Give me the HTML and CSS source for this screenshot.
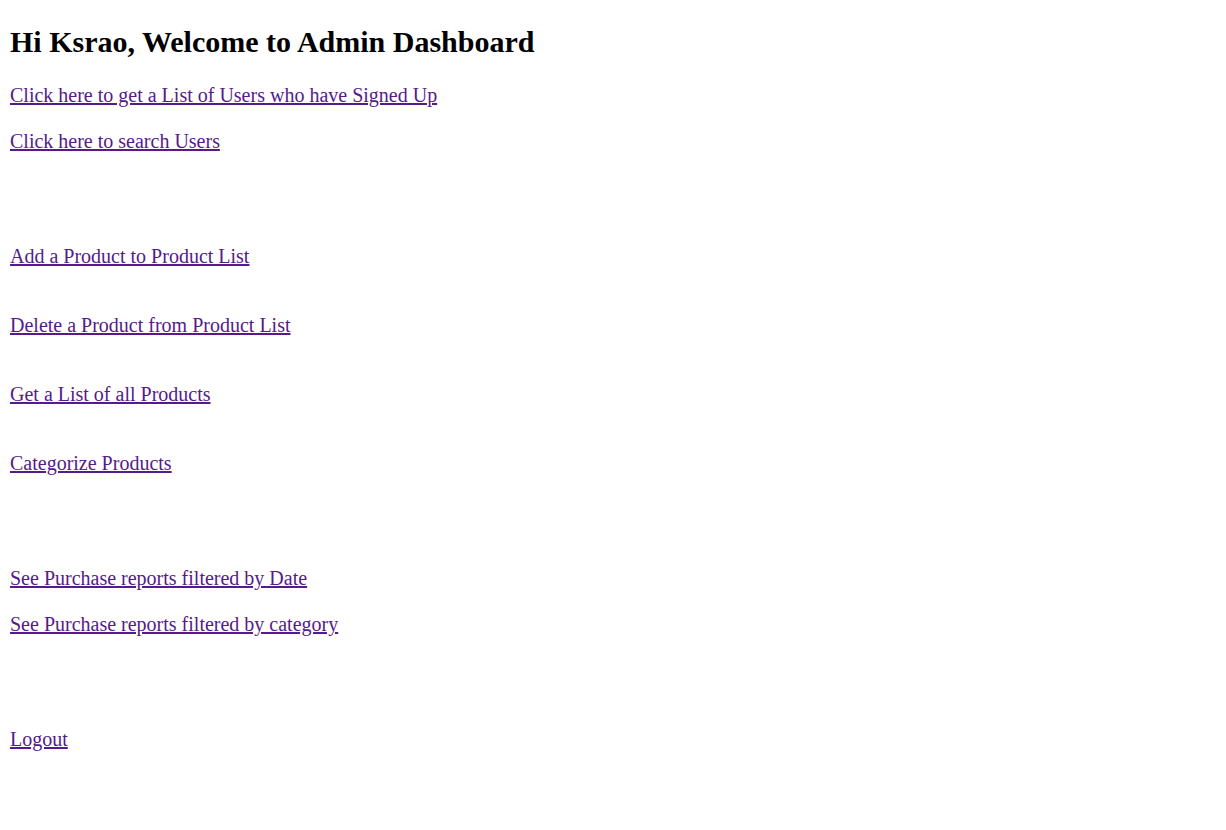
FILE: index.html
```html
<!DOCTYPE html>
<html>
<head>
<meta charset="utf-8">
<title>Admin Dashboard</title>
<link rel="stylesheet" href="styles.css">
</head>
<body class="page">
<h2 class="title">Hi Ksrao, Welcome to Admin Dashboard</h2>
<div class="links">
  <div class="row"><a class="link" href="#">Click here to get a List of Users who have Signed Up</a></div>
  <div class="row gap1"><a class="link" href="#">Click here to search Users</a></div>
  <div class="row gap4"><a class="link" href="#">Add a Product to Product List</a></div>
  <div class="row gap2"><a class="link" href="#">Delete a Product from Product List</a></div>
  <div class="row gap2"><a class="link" href="#">Get a List of all Products</a></div>
  <div class="row gap2"><a class="link" href="#">Categorize Products</a></div>
  <div class="row gap4"><a class="link" href="#">See Purchase reports filtered by Date</a></div>
  <div class="row gap1"><a class="link" href="#">See Purchase reports filtered by category</a></div>
  <div class="row gap4"><a class="link" href="#">Logout</a></div>
</div>
</body>
</html>
```
FILE: styles.css
```css
html, body { background: #fff; }
.page {
  margin: 0;
  padding: 24px 10px 10px;
  font-family: "Liberation Serif", "Times New Roman", serif;
  font-size: 20px;
  color: #000;
}
.title {
  font-size: 30px;
  font-weight: bold;
  margin: 0 0 25px;
  line-height: 35px;
}
.links { line-height: 23px; }
.row { margin: 0; }
.gap1 { margin-top: 23px; }
.gap2 { margin-top: 46px; }
.gap4 { margin-top: 92px; }
.link { color: #551a8b; text-decoration: underline; }
```
